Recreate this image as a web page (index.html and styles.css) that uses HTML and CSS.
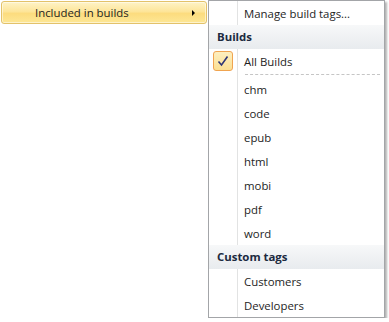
FILE: index.html
```html
<!DOCTYPE html>
<html>
<head>
    <title>Included in builds</title>
    <link rel="stylesheet" href="styles.css">
</head>
<body>
    <div class="menus">
        <div class="parent-menu">
            <div class="parent-item">
                <span class="parent-label">Included in builds</span>
                <span class="arrow"></span>
            </div>
        </div>

        <div class="submenu">
            <div class="item"><span class="icon-col"></span><span class="label">Manage build tags...</span></div>

            <div class="group-header">Builds</div>

            <div class="item checked">
                <span class="icon-col">
                    <span class="check-box">
                        <svg width="14" height="14" viewBox="0 0 14 14">
                            <path d="M2.5 7.5 L5.5 11 L11.5 2.5" fill="none" stroke="#2f3675" stroke-width="1.6"/>
                        </svg>
                    </span>
                </span>
                <span class="label">All Builds</span>
            </div>
            <div class="separator"><span class="icon-col"></span><span class="dash"></span></div>

            <div class="item"><span class="icon-col"></span><span class="label">chm</span></div>
            <div class="item"><span class="icon-col"></span><span class="label">code</span></div>
            <div class="item"><span class="icon-col"></span><span class="label">epub</span></div>
            <div class="item"><span class="icon-col"></span><span class="label">html</span></div>
            <div class="item"><span class="icon-col"></span><span class="label">mobi</span></div>
            <div class="item"><span class="icon-col"></span><span class="label">pdf</span></div>
            <div class="item"><span class="icon-col"></span><span class="label">word</span></div>

            <div class="group-header">Custom tags</div>

            <div class="item"><span class="icon-col"></span><span class="label">Customers</span></div>
            <div class="item"><span class="icon-col"></span><span class="label">Developers</span></div>
        </div>
    </div>
</body>
</html>
```

FILE: styles.css
```css
body {
    margin: 0;
    background-color: #fff;
    font-family: "Open Sans", "Noto Sans", Arial, sans-serif;
    font-size: 11.4px;
    color: #1e1e1e;
}

.menus {
    display: flex;
    align-items: flex-start;
}

.parent-menu {
    width: 208px;
    padding-top: 1px;
}

.parent-item {
    display: flex;
    align-items: center;
    justify-content: space-between;
    height: 21px;
    margin-left: 1px;
    width: 160px;
    padding-left: 33px;
    padding-right: 11px;
    border: 1px solid #e3c26a;
    border-radius: 3px;
    background: linear-gradient(to bottom, #fef3c7 0%, #fde59a 45%, #fcdc7e 55%, #fde796 100%);
    box-shadow: inset 0 0 0 1px rgba(255, 255, 255, 0.5);
}

.parent-label {
    color: #1e1e1e;
}

.arrow {
    width: 0;
    height: 0;
    border-top: 3px solid transparent;
    border-bottom: 3px solid transparent;
    border-left: 3px solid #000;
}

.submenu {
    width: 175px;
    background-color: #fff;
    border: 1px solid #a3a5a8;
    box-shadow: 2px 2px 2px rgba(0, 0, 0, 0.3);
}

.item {
    display: flex;
    align-items: center;
    height: 24px;
}

.icon-col {
    width: 28px;
    height: 100%;
    border-right: 1px solid #e2e3e3;
    display: flex;
    align-items: center;
    justify-content: center;
    flex-shrink: 0;
}

.label {
    padding-left: 6px;
}

.check-box {
    width: 20px;
    height: 20px;
    box-sizing: border-box;
    border: 1px solid #f0a450;
    border-radius: 3px;
    background: linear-gradient(to bottom, #fdefc0, #fbdf92);
    display: flex;
    align-items: center;
    justify-content: center;
}

.group-header {
    height: 24px;
    line-height: 24px;
    padding-left: 8px;
    font-weight: bold;
    color: #1c2a40;
    background: linear-gradient(to bottom, #f7f8f9, #e8ebee);
}

.separator {
    display: flex;
    height: 4px;
}

.separator .icon-col {
    height: 4px;
}

.dash {
    flex: 1;
    margin: 1px 4px 0 7px;
    border-top: 1px dashed #c5c5c5;
}
```
